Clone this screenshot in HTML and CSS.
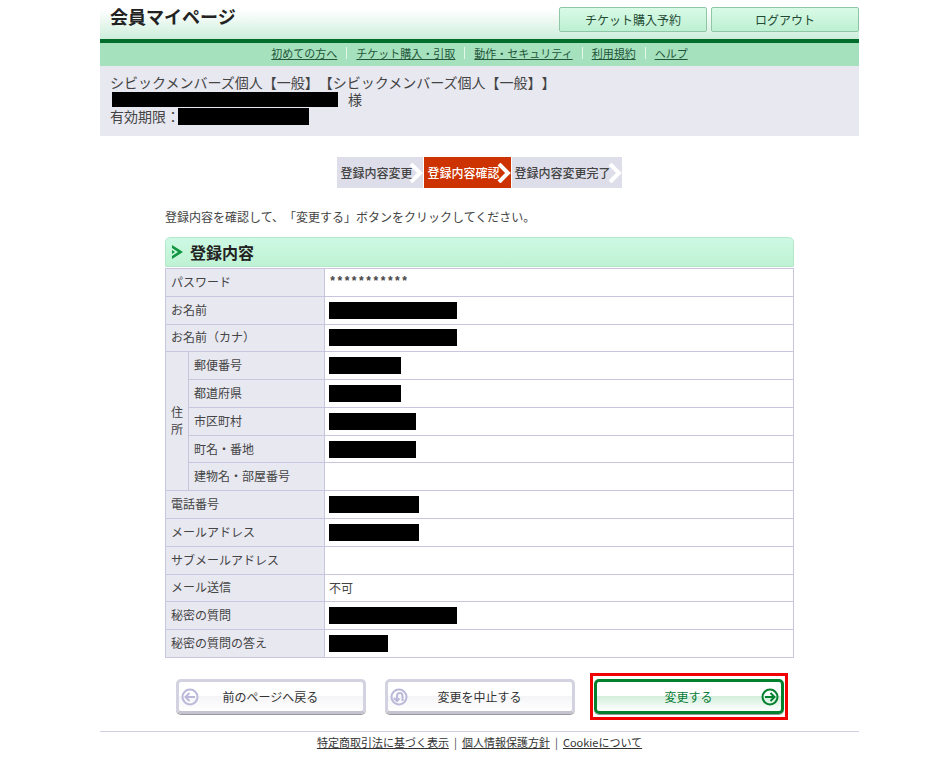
FILE: index.html
```html
<!DOCTYPE html>
<html lang="ja">
<head>
<meta charset="utf-8">
<title>会員マイページ</title>
<link rel="stylesheet" href="styles.css">
</head>
<body>
<header class="header">
  <h1 class="title">会員マイページ</h1>
  <div class="header-actions">
    <button type="button" class="top-button">チケット購入予約</button>
    <button type="button" class="top-button">ログアウト</button>
  </div>
</header>
<nav class="nav">
  <a href="#">初めての方へ</a>
  <a href="#">チケット購入・引取</a>
  <a href="#">動作・セキュリティ</a>
  <a href="#">利用規約</a>
  <a href="#">ヘルプ</a>
</nav>
<section class="member">
  <p>シビックメンバーズ個人【一般】【シビックメンバーズ個人【一般】】</p>
  <p class="member-name"><span class="mask mask-name"></span>様</p>
  <p>有効期限：<span class="mask mask-date"></span></p>
</section>
<main class="main">
  <ol class="steps">
    <li class="step">登録内容変更<svg class="chevron" viewBox="0 0 14 20"><path d="M2 1 L11 10 L2 19"/></svg></li>
    <li class="step step-current">登録内容確認<svg class="chevron" viewBox="0 0 14 20"><path d="M2 1 L11 10 L2 19"/></svg></li>
    <li class="step">登録内容変更完了<svg class="chevron" viewBox="0 0 14 20"><path d="M2 1 L11 10 L2 19"/></svg></li>
  </ol>
  <p class="lead">登録内容を確認して、「変更する」ボタンをクリックしてください。</p>
  <h2 class="section-title">
    <svg class="arrow" viewBox="0 0 12 14"><path d="M1 0 L12 7 L1 14 V11 L7 7 L1 3Z"/><path d="M1 5 L4 7 L1 9Z"/></svg>
    登録内容
  </h2>
  <table class="details">
    <colgroup><col class="col-group"><col class="col-label"><col></colgroup>
    <tbody>
      <tr><th colspan="2" scope="row">パスワード</th><td><span class="password">***********</span></td></tr>
      <tr><th colspan="2" scope="row">お名前</th><td><span class="mask mask-xl"></span></td></tr>
      <tr><th colspan="2" scope="row">お名前（カナ）</th><td><span class="mask mask-xl"></span></td></tr>
      <tr><th rowspan="5" scope="rowgroup">住所</th><th scope="row">郵便番号</th><td><span class="mask mask-m"></span></td></tr>
      <tr><th scope="row">都道府県</th><td><span class="mask mask-m"></span></td></tr>
      <tr><th scope="row">市区町村</th><td><span class="mask mask-l"></span></td></tr>
      <tr><th scope="row">町名・番地</th><td><span class="mask mask-l"></span></td></tr>
      <tr><th scope="row">建物名・部屋番号</th><td></td></tr>
      <tr><th colspan="2" scope="row">電話番号</th><td><span class="mask mask-tel"></span></td></tr>
      <tr><th colspan="2" scope="row">メールアドレス</th><td><span class="mask mask-tel"></span></td></tr>
      <tr><th colspan="2" scope="row">サブメールアドレス</th><td></td></tr>
      <tr><th colspan="2" scope="row">メール送信</th><td>不可</td></tr>
      <tr><th colspan="2" scope="row">秘密の質問</th><td><span class="mask mask-xl"></span></td></tr>
      <tr><th colspan="2" scope="row">秘密の質問の答え</th><td><span class="mask mask-s"></span></td></tr>
    </tbody>
  </table>
  <div class="actions">
    <button type="button" class="action">
      <svg class="action-icon" viewBox="0 0 18 18"><circle cx="9" cy="9" r="7.500"/><path d="M14 9 H5 M8.500 5 L4.500 9 L8.500 13"/></svg>
      前のページへ戻る
    </button>
    <button type="button" class="action">
      <svg class="action-icon" viewBox="0 0 18 18"><circle cx="9" cy="9" r="7.500"/><path d="M12.500 13 V8 Q12.500 5 10 5 Q7 5 7 8 V12 M4 10 L7 13 L9.500 10.500"/></svg>
      変更を中止する
    </button>
    <div class="highlight">
      <button type="submit" class="action action-primary">
        変更する
        <svg class="action-icon" viewBox="0 0 18 18"><circle cx="9" cy="9" r="7.500"/><path d="M4 9 H13 M9.500 5 L13.500 9 L9.500 13"/></svg>
      </button>
    </div>
  </div>
</main>
<footer class="footer">
  <a href="#">特定商取引法に基づく表示</a> | <a href="#">個人情報保護方針</a> | <a href="#">Cookieについて</a>
</footer>
</body>
</html>
```
FILE: styles.css
```css
* { box-sizing: border-box; }
body {
  margin: 0;
  padding: 0 91px 0 100px;
  background: #fff;
  color: #444;
  font: 12px/17px "Noto Sans CJK JP", sans-serif;
  text-spacing-trim: space-all;
}
p, h1, h2, ol { margin: 0; padding: 0; }
button { font: inherit; padding: 0; cursor: pointer; }

.header {
  display: flex;
  justify-content: space-between;
  align-items: flex-start;
  height: 43px;
  padding-left: 10px;
  border-bottom: 4px solid #006d2c;
  background: linear-gradient(#fff 25%, #cdeedb);
}
.title { font-size: 18px; line-height: 32px; color: #222; }
.header-actions { display: flex; gap: 4px; padding-top: 7px; }
.top-button {
  width: 148px;
  height: 25px;
  border: 1px solid #8fc7a6;
  border-radius: 2px;
  background: linear-gradient(#d9fae6, #bdf0d2);
  color: #234a33;
}

.nav {
  display: flex;
  justify-content: center;
  height: 23px;
  padding-top: 3px;
  background: #a6e1bd;
  font-size: 11px;
  line-height: 15px;
}
.nav a { display: flex; color: #22553a; }
.nav a + a::before {
  content: "";
  width: 1px;
  height: 12px;
  margin: 1px 9px;
  background: #e2f7ea;
}

.member {
  min-height: 70px;
  padding: 8px 10px;
  background: #e8e8f1;
  font-size: 14px;
}
.member p { display: flex; align-items: center; }
.member-name { gap: 10px; }
.mask { display: block; height: 17px; background: #000; }
.member .mask { height: 15px; }
.member .mask-name { width: 226px; margin-left: 2px; }
.member .mask-date { width: 131px; height: 17px; margin-left: -2px; }

.main { padding: 21px 65px 0; }
.steps {
  display: flex;
  justify-content: center;
  gap: 1px;
  list-style: none;
}
.step {
  display: flex;
  align-items: center;
  height: 31px;
  padding-left: 3px;
  background: #dedeea;
  font-weight: 500;
}
.step-current { background: #cc3300; color: #fff; }
.chevron {
  width: 14px;
  height: 20px;
  margin-left: -3px;
  fill: none;
  stroke: #fff;
  stroke-width: 4;
}
.lead { margin-top: 20px; }
.section-title {
  display: flex;
  align-items: center;
  gap: 7px;
  height: 30px;
  margin: 12px 0 1px;
  padding-left: 5px;
  border: 1px solid #b5e8cb;
  border-radius: 5px 5px 0 0;
  background: linear-gradient(#cdf9e4, #bff2d3);
  color: #222;
  font-size: 16px;
}
.arrow { width: 12px; height: 14px; fill: #119540; }

.details {
  width: 100%;
  height: 390px;
  border-collapse: collapse;
  table-layout: fixed;
}
.details tr { height: 27px; }
.col-group { width: 23px; }
.col-label { width: 136px; }
.details th, .details td {
  padding: 0 5px 2px;
  border: 1px solid #c8c6de;
  text-align: left;
  font-weight: 400;
}
.details td { padding: 0 4px; }
.details th { background: #e8e8f1; }
.password { display: block; font: bold 12px/17px "Liberation Mono", monospace; }
.mask-xl { width: 128px; }
.mask-l { width: 87px; }
.mask-m { width: 72px; }
.mask-s { width: 59px; }
.mask-tel { width: 90px; }

.actions {
  display: flex;
  justify-content: center;
  align-items: center;
  gap: 19px;
  margin-top: 15px;
}
.action {
  display: grid;
  grid-template-columns: 18px 1fr 18px;
  align-items: center;
  width: 190px;
  height: 35px;
  padding: 0 2px;
  border: 3px solid #d3d2e0;
  border-bottom-color: #c4c3cf;
  border-radius: 5px;
  background: linear-gradient(#fff 48%, #f5f5f8 50%, #fff);
  box-shadow: inset 0 -1px #fff, 0 1px #999;
  color: #333;
}
.action-icon {
  width: 18px;
  height: 18px;
  fill: none;
  stroke: #bab9da;
  stroke-width: 2;
}
.action-primary {
  border-color: #04812f;
  background: linear-gradient(#fff 48%, #d4eedc 50%, #fff);
  color: #087c36;
}
.action-primary::before { content: ""; }
.action-primary .action-icon { stroke: #04812f; }
.highlight {
  margin: 0 -4px;
  padding: 3px 1px;
  border: 3px solid #f00000;
}

.footer {
  display: flex;
  justify-content: center;
  gap: 5px;
  margin-top: 11px;
  padding-top: 2px;
  border-top: 1px solid #d0cfe3;
  font-size: 11px;
}
.footer a { color: #333; }
```
